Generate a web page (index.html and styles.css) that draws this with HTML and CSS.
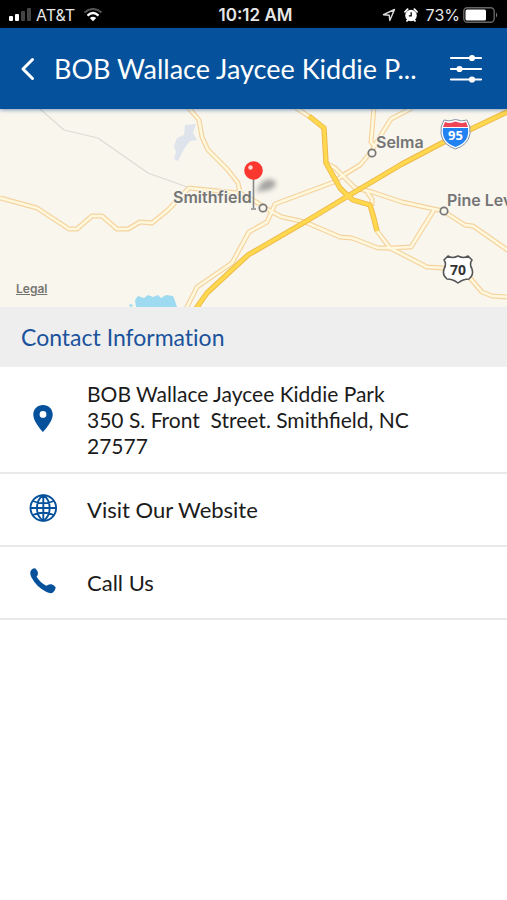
FILE: index.html
```html
<!DOCTYPE html>
<html lang="en">
<head>
<meta charset="utf-8">
<meta name="viewport" content="width=device-width, initial-scale=1">
<title>BOB Wallace Jaycee Kiddie Park</title>
<link rel="stylesheet" href="styles.css">
</head>
<body>
<div class="status">
  <div class="status-side">
    <svg width="24" height="14" viewBox="0 0 24 14" aria-hidden="true">
      <rect x="1" y="8" width="4" height="5" rx="1" fill="#fff"/>
      <rect x="7" y="6" width="4" height="7" rx="1" fill="#fff"/>
      <rect x="13" y="3" width="4" height="10" rx="1" fill="#444"/>
      <rect x="19" y="0" width="4" height="13" rx="1" fill="#444"/>
    </svg>
    <span class="carrier">AT&amp;T</span>
    <svg class="wifi" width="20" height="14" viewBox="0 0 20 14" fill="none" aria-hidden="true">
      <path d="M1.500 4.500Q10 -2.500 18.500 4.500" stroke="#555" stroke-width="2"/>
      <path d="M4.500 7.600Q10 2.600 15.500 7.600" stroke="#fff" stroke-width="2.400"/>
      <path d="M6.800 10Q10 7.300 13.200 10L10 13.300Z" fill="#fff"/>
    </svg>
  </div>
  <time class="clock">10:12 AM</time>
  <div class="status-side status-right">
    <svg width="14" height="14" viewBox="0 0 14 14" fill="none" stroke="#ddd" stroke-width="1.400" stroke-linejoin="round" aria-hidden="true">
      <path d="M1.500 6.700L12.500 1.500L7.800 12.500L7.200 7.200Z"/>
    </svg>
    <svg class="alarm" width="14" height="14" viewBox="0 0 14 14" aria-hidden="true">
      <circle cx="7" cy="7.500" r="5.800" fill="#fff"/>
      <path d="M1 3.800L3.600 1.200M13 3.800L10.400 1.200M3 12.800L4 11.800M11 12.800L10 11.800" stroke="#fff" stroke-width="1.800" stroke-linecap="round"/>
      <path d="M7.200 4.300V7.900H4.800" fill="none" stroke="#000" stroke-width="1.300"/>
    </svg>
    <span class="percent">73%</span>
    <svg width="36" height="16" viewBox="0 0 36 16" aria-hidden="true">
      <rect x=".8" y=".8" width="30.400" height="14.400" rx="3.500" fill="none" stroke="#666" stroke-width="1.400"/>
      <rect x="2.500" y="2.500" width="20.500" height="11" rx="1.500" fill="#fff"/>
      <path d="M33 5.500Q35.500 8 33 10.500Z" fill="#777"/>
    </svg>
  </div>
</div>

<header class="bar">
  <button class="bar-button" type="button" aria-label="Back">
    <svg width="16" height="24" viewBox="0 0 16 24" fill="none" stroke="#fff" stroke-width="3" stroke-linecap="round" stroke-linejoin="round" aria-hidden="true"><path d="M12.500 2.500L3 12L12.500 21.500"/></svg>
  </button>
  <h1 class="title">BOB Wallace Jaycee Kiddie P...</h1>
  <button class="bar-button" type="button" aria-label="Options">
    <svg width="34" height="30" viewBox="0 0 34 30" fill="#fff" stroke="#fff" stroke-width="2.200" stroke-linecap="round" aria-hidden="true">
      <path d="M2 4H32M2 15H32M2 25.500H32"/>
      <circle cx="23" cy="4" r="2"/><circle cx="10.500" cy="15" r="2"/><circle cx="23" cy="25.500" r="2"/>
    </svg>
  </button>
</header>

<main>
  <section class="map" aria-label="Map">
    <svg class="map-art" viewBox="0 109 507 198" preserveAspectRatio="xMidYMid slice">
      <defs>
        <filter id="soft" x="-50%" y="-50%" width="200%" height="200%"><feGaussianBlur stdDeviation="2.500"/></filter>
        <g id="minor">
          <path d="M0 198L37 208L69 229H77L92 216H102L117 229H128L140 222L152 223L168 210L189 188L228 192L240 193L258 203L272 212L282 217L305 222L340 237L352 238L378 248H392L411 247L434 210"/>
          <path d="M188 107L199 120L202 137L208 150L228 170L238 183L240 193"/>
          <path d="M186 309L197 287L232 263L249 232L267 222L275 204L334 182L342 176L360 165L371 152L384 130L391 119L412 108"/>
          <path d="M374 107L371 142L375 147"/>
          <path d="M296 108L310 117"/>
          <path d="M326 163L335 168L355 188L372 192L402 202L443 211L465 225L473 226L509 251"/>
          <path d="M367 192L372 199V206"/>
          <path d="M377 231L390 248L427 267L458 269L470 278L482 292L492 296L509 297"/>
        </g>
        <g id="major">
          <path d="M195 310L207 293L248 255L305 222L348 196L402 164L442 143L509 111"/>
          <path d="M309 116L324 128L326 163L340 188L348 196L353 200L370 205L373 215L377 231"/>
        </g>
      </defs>
      <rect x="0" y="109" width="507" height="198" fill="#f9f6ee"/>
      <path d="M185 125L196 124L193 133L197 140L190 141L184 149L178 161L174 159L176 152L174 146L177 138L184 135Z" fill="#dfe3ec"/>
      <path d="M136 307L135 300L138 296L144 298L148 295L153 297L158 295L161 298L166 295L173 296L175 301L177 307ZM130 304L133 305L132 307L129 306Z" fill="#9edaf0"/>
      <path d="M40 109L64 130L98 138L148 173L187 187" fill="none" stroke="#dedbd5" stroke-width="1.200"/>
      <g fill="none" stroke-linejoin="round">
        <use href="#minor" stroke="#f5d3a0" stroke-width="5"/>
        <use href="#minor" stroke="#fff8dc" stroke-width="2.600"/>
        <use href="#major" stroke="#edb84c" stroke-width="5.400"/>
        <use href="#major" stroke="#ffd84d" stroke-width="3.600"/>
      </g>
      <g fill="#f9f6ee" stroke="#777" stroke-width="1.700">
        <circle cx="263" cy="208" r="3.700"/><circle cx="372" cy="153" r="3.700"/><circle cx="444" cy="211" r="3.700"/>
      </g>
      <g class="place">
        <text x="173" y="203">Smithfield</text>
        <text x="376" y="148">Selma</text>
        <text x="447" y="206">Pine Lev</text>
      </g>
      <path d="M444 120Q449 122 455.500 119.500Q462 122 467 120Q471 126 470 134Q468 145 455.500 149Q443 145 441 134Q440 126 444 120Z" fill="#fff" stroke="#8793a6" stroke-width="1"/>
      <path d="M443 128H468Q470 142 455.500 147Q441 142 443 128Z" fill="#2382f2"/>
      <path d="M445 122Q450 124 455.500 121.500Q461 124 466 122L468 127H443Z" fill="#ee4657"/>
      <text class="shield shield-light" x="455.500" y="140">95</text>
      <path d="M448 256Q452 259 458 256Q464 259 468 256L472 260Q469 264 472 269Q474 275 469 279Q463 279 458 283Q453 279 447 279Q442 275 444 269Q447 264 444 260Z" fill="#fff" stroke="#555" stroke-width="1.600" stroke-linejoin="round"/>
      <text class="shield" x="458" y="275">70</text>
      <path d="M256 192L262 182Q268 177 275 181Q278 187 269 190Z" fill="#777" opacity=".65" filter="url(#soft)"/>
      <path d="M253.500 178V208M251 209H256" stroke="#888" stroke-width="1.600"/>
      <circle cx="253.500" cy="170.500" r="9.300" fill="#fb3830"/>
      <circle cx="250.500" cy="167.500" r="2.200" fill="#ffd8d4"/>
    </svg>
    <a class="legal" href="#legal">Legal</a>
  </section>

  <h2 class="section-title">Contact Information</h2>
  <ul class="contacts">
    <li><a class="contact" href="#address">
      <svg class="contact-icon" viewBox="0 0 28 28" aria-hidden="true"><path fill="#05519b" fill-rule="evenodd" d="M14-1C8.500-1 4.300 3 4.300 8.500C4.300 16 14 26 14 26S23.700 16 23.700 8.500C23.700 3 19.500-1 14-1ZM14 5A3.400 3.400 0 1 1 14 11.800A3.400 3.400 0 1 1 14 5Z"/></svg>
      <span class="address">BOB Wallace Jaycee Kiddie Park
350 S. Front  Street. Smithfield, NC
27577</span>
    </a></li>
    <li><a class="contact" href="#website">
      <svg class="contact-icon" viewBox="0 0 28 28" fill="none" stroke="#05519b" stroke-width="1.900" aria-hidden="true"><circle cx="14.300" cy="12" r="12.800"/><path d="M14.300-1V25M1.500 12H27M3.800 5Q14.300 9.500 24.800 5M3.800 19Q14.300 14.500 24.800 19M14.300-1C5.800 5 5.800 19 14.300 25M14.300-1C22.800 5 22.800 19 14.300 25"/></svg>
      <span>Visit Our Website</span>
    </a></li>
    <li><a class="contact" href="#call">
      <svg class="contact-icon" viewBox="0 0 28 28" aria-hidden="true"><path fill="#05519b" d="M2.200 1Q4.500-1.500 6.800-.3Q9.500 2.500 8.800 5.500Q8.500 6.800 7.600 7.800Q11 13.500 17.200 16.800Q19.500 14.800 22.500 15.200Q25.500 16 26.700 18.500Q26.500 21.500 24 23.500Q21.500 25 17.500 23Q7.500 18 2.500 8.500Q.2 4 2.200 1Z"/></svg>
      <span>Call Us</span>
    </a></li>
  </ul>
</main>
</body>
</html>
```

FILE: styles.css
```css
* {
  box-sizing: border-box;
}

body {
  margin: 0;
  background: #fff;
  color: #1b1b1b;
  font-family: Lato, "Open Sans", sans-serif;
}

svg {
  display: block;
  flex: none;
}

.status {
  display: flex;
  align-items: center;
  height: 28px;
  padding: 2px 8px 0;
  background: #000;
  color: #e6e6e6;
  font-family: Inter, Roboto, sans-serif;
  font-size: 16px;
}

.status-side {
  display: flex;
  flex: 1;
  align-items: center;
}

.status-right {
  justify-content: flex-end;
}

.carrier {
  margin-left: 4px;
}

.wifi {
  margin-left: 8px;
}

.clock {
  padding-left: 4px;
  font-size: 17px;
  font-weight: 600;
}

.alarm {
  margin: 0 8px;
}

.percent {
  margin-right: 3px;
}

.bar {
  position: relative;
  z-index: 1;
  display: flex;
  align-items: center;
  height: 81px;
  padding: 0 24px 0 20px;
  background: #05519b;
  box-shadow: 0 1px 4px rgba(5, 60, 130, 0.5);
  color: #fff;
}

.bar-button {
  padding: 0;
  border: 0;
  background: none;
}

.title {
  flex: 1;
  min-width: 0;
  margin: 0 20px 0 18px;
  overflow: hidden;
  font-size: 27px;
  font-weight: 400;
  line-height: 40px;
  text-overflow: ellipsis;
  white-space: nowrap;
}

.map {
  position: relative;
}

.map-art {
  width: 100%;
  height: 198px;
}

.place {
  fill: #757575;
  stroke: #f9f6ee;
  stroke-width: 2px;
  paint-order: stroke;
  font: 600 16px Inter, sans-serif;
}

.shield {
  fill: #333;
  font: 700 14px "Open Sans", sans-serif;
  text-anchor: middle;
}

.shield-light {
  fill: #fff;
  font-size: 13px;
}

.legal {
  position: absolute;
  bottom: 10px;
  left: 16px;
  color: #77756f;
  font: 600 12px/16px Inter, sans-serif;
}

.section-title {
  margin: 0;
  padding: 16px 21px;
  background: #eee;
  color: #1b529c;
  font-size: 23px;
  font-variant-ligatures: none;
  font-weight: 400;
  line-height: 28px;
}

.contacts {
  margin: 0;
  padding: 0;
  list-style: none;
}

.contact {
  display: flex;
  align-items: center;
  gap: 30px;
  min-height: 73px;
  padding: 14px 29px 13px;
  border-bottom: 2px solid #e9e9e9;
  color: inherit;
  font-size: 22px;
  line-height: 26px;
  text-decoration: none;
}

.contact-icon {
  width: 28px;
  height: 28px;
  overflow: visible;
}

.address {
  font-size: 21px;
  white-space: pre-wrap;
}
```
